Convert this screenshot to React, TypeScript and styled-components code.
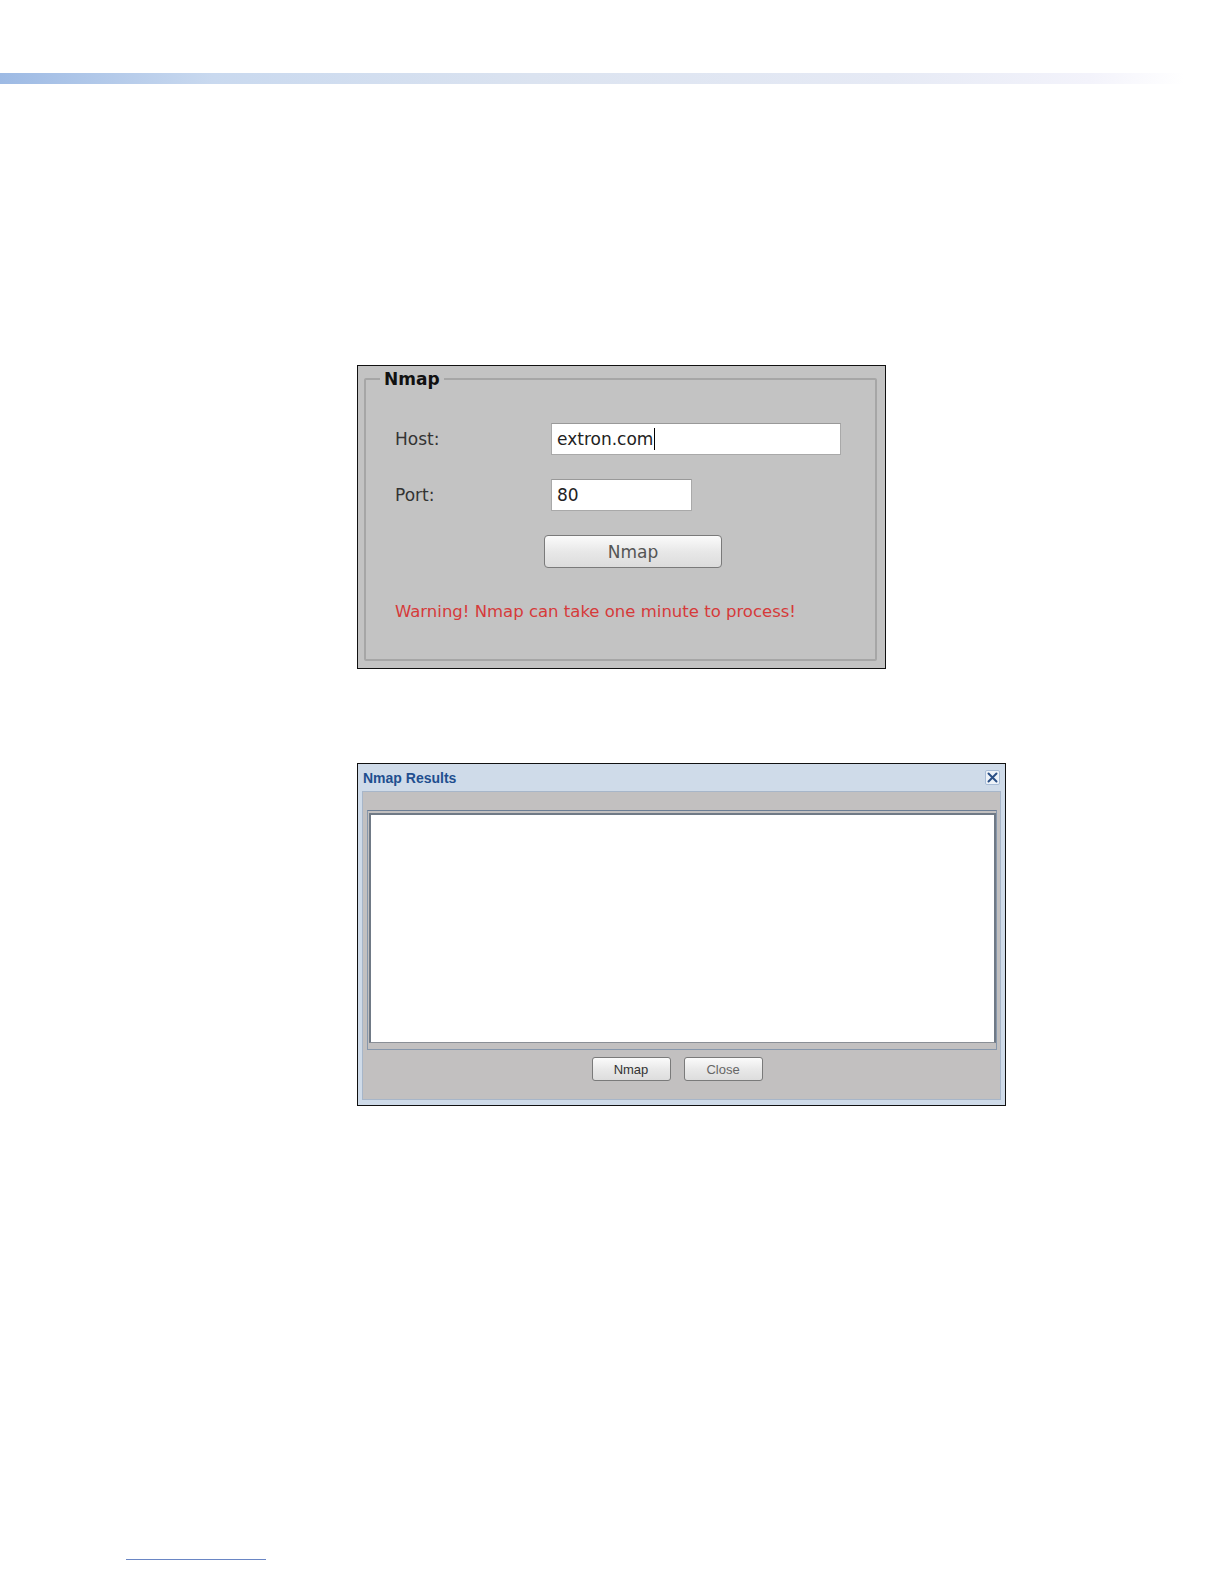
import styled, { createGlobalStyle } from 'styled-components';

const GlobalStyle = createGlobalStyle`
  html, body {
    margin: 0;
    padding: 0;
    background: #fff;
  }
  body {
    font-family: 'Liberation Sans', Arial, sans-serif;
  }
`;

function App() {
  return (
    <Page>
      <GlobalStyle />
      <TopBar />

      <NmapPanel>
        <Fieldset>
          <Legend>Nmap</Legend>
          <FormBody>
            <FormGrid>
              <FieldLabel>Host:</FieldLabel>
              <TextBox width={290}>
                extron.com<Caret />
              </TextBox>
              <FieldLabel>Port:</FieldLabel>
              <TextBox width={141}>80</TextBox>
              <span />
              <BigButton>Nmap</BigButton>
            </FormGrid>
            <Warning>Warning! Nmap can take one minute to process!</Warning>
          </FormBody>
        </Fieldset>
      </NmapPanel>

      <Dialog>
        <TitleBar>
          <Title>Nmap Results</Title>
          <CloseBox>
            <svg width="11" height="11" viewBox="0 0 11 11">
              <path d="M1.5 1.5 L9.5 9.5 M9.5 1.5 L1.5 9.5" stroke="#2a4f86" strokeWidth="2" strokeLinecap="round" />
            </svg>
          </CloseBox>
        </TitleBar>
        <DialogBody>
          <OutputFrame>
            <OutputArea />
          </OutputFrame>
          <ButtonRow>
            <SmallButton>Nmap</SmallButton>
            <SmallButton muted>Close</SmallButton>
          </ButtonRow>
        </DialogBody>
      </Dialog>

      <FootLink />
    </Page>
  );
}

const Page = styled.div`
  display: flex;
  flex-direction: column;
  width: 1224px;
  min-height: 1584px;
  padding-top: 73px;
  box-sizing: border-box;
`;

const TopBar = styled.div`
  width: 1184px;
  height: 11px;
  background: linear-gradient(90deg, #9dbae4 0%, #c9d9ef 18%, #dbe3f0 45%, #e6eaf5 75%, #f3f3fb 92%, #ffffff 100%);
`;

const NmapPanel = styled.div`
  margin: 281px 0 0 357px;
  width: 529px;
  height: 304px;
  box-sizing: border-box;
  border: 1px solid #111;
  background: #c3c3c3;
  padding: 2px 8px 7px 6px;
  display: flex;
`;

const Fieldset = styled.fieldset`
  flex: 1;
  margin: 0;
  border: 2px solid #a6a6a6;
  border-radius: 2px;
  padding: 0;
  display: flex;
  flex-direction: column;
`;

const Legend = styled.legend`
  margin-left: 14px;
  padding: 0 4px;
  font-family: 'DejaVu Sans', 'Liberation Sans', sans-serif;
  font-weight: bold;
  font-size: 17px;
  line-height: 22px;
  color: #111;
`;

const FormBody = styled.div`
  padding: 33px 20px 0 29px;
  display: flex;
  flex-direction: column;
`;

const FormGrid = styled.div`
  display: grid;
  grid-template-columns: 156px auto;
  row-gap: 24px;
  align-items: center;
  justify-items: start;
`;

const FieldLabel = styled.span`
  font-family: 'DejaVu Sans', 'Liberation Sans', sans-serif;
  font-size: 17px;
  color: #333;
`;

const TextBox = styled.div<{ width: number }>`
  width: ${({ width }) => width}px;
  height: 32px;
  box-sizing: border-box;
  background: #fff;
  border: 1px solid #a9a9a9;
  border-top-color: #999;
  padding: 0 5px;
  display: flex;
  align-items: center;
  font-family: 'DejaVu Sans', 'Liberation Sans', sans-serif;
  font-size: 17px;
  color: #222;
`;

const Caret = styled.span`
  display: inline-block;
  width: 1px;
  height: 22px;
  margin-left: 1px;
  background: #000;
`;

const BigButton = styled.button`
  margin-left: -7px;
  width: 178px;
  height: 33px;
  border: 1px solid #7a7a7a;
  border-radius: 4px;
  background: linear-gradient(#fbfbfb, #e8e8e8 50%, #dcdcdc);
  font-family: 'DejaVu Sans', 'Liberation Sans', sans-serif;
  font-size: 17px;
  color: #555;
  padding: 0;
`;

const Warning = styled.div`
  margin-top: 33px;
  font-family: 'DejaVu Sans', 'Liberation Sans', sans-serif;
  font-size: 16.5px;
  line-height: 22px;
  color: #d63a3a;
`;

const Dialog = styled.div`
  margin: 94px 0 0 357px;
  width: 649px;
  height: 343px;
  box-sizing: border-box;
  border: 1px solid #111;
  background: #cfdbe9;
  padding: 0 4px 5px 4px;
  display: flex;
  flex-direction: column;
`;

const TitleBar = styled.div`
  height: 27px;
  display: flex;
  align-items: center;
  justify-content: space-between;
  padding: 0 1px 0 1px;
`;

const Title = styled.span`
  font-family: 'Liberation Sans', Arial, sans-serif;
  font-weight: bold;
  font-size: 14px;
  color: #1f4f8f;
`;

const CloseBox = styled.span`
  width: 15px;
  height: 15px;
  box-sizing: border-box;
  border: 1px solid #a8bcd6;
  border-radius: 2px;
  background: #eef3f9;
  display: flex;
  align-items: center;
  justify-content: center;
`;

const DialogBody = styled.div`
  flex: 1;
  background: #c2c0c0;
  border: 1px solid #a7b6c9;
  padding: 18px 3px 0 4px;
  display: flex;
  flex-direction: column;
`;

const OutputFrame = styled.div`
  height: 240px;
  box-sizing: border-box;
  border: 1px solid #8797ab;
  border-top-color: #6d7f96;
  padding: 2px 0 6px 1px;
  display: flex;
`;

const OutputArea = styled.div`
  flex: 1;
  background: #fff;
  border: 2px solid #707a86;
  border-bottom: 1px solid #8a8f96;
`;

const ButtonRow = styled.div`
  display: flex;
  justify-content: center;
  gap: 13px;
  margin-top: 7px;
  padding-right: 10px;
`;

const SmallButton = styled.button<{ muted?: boolean }>`
  width: 79px;
  height: 24px;
  border: 1px solid #7a7a7a;
  border-radius: 3px;
  background: linear-gradient(#fbfbfb, #e9e9e9 50%, #dddddd);
  font-family: 'Liberation Sans', Arial, sans-serif;
  font-size: 13px;
  color: ${({ muted }) => (muted ? '#666' : '#333')};
  padding: 0;
`;

const FootLink = styled.div`
  margin: 453px 0 0 126px;
  width: 140px;
  height: 1px;
  background: #6a86c4;
`;

export default App;
